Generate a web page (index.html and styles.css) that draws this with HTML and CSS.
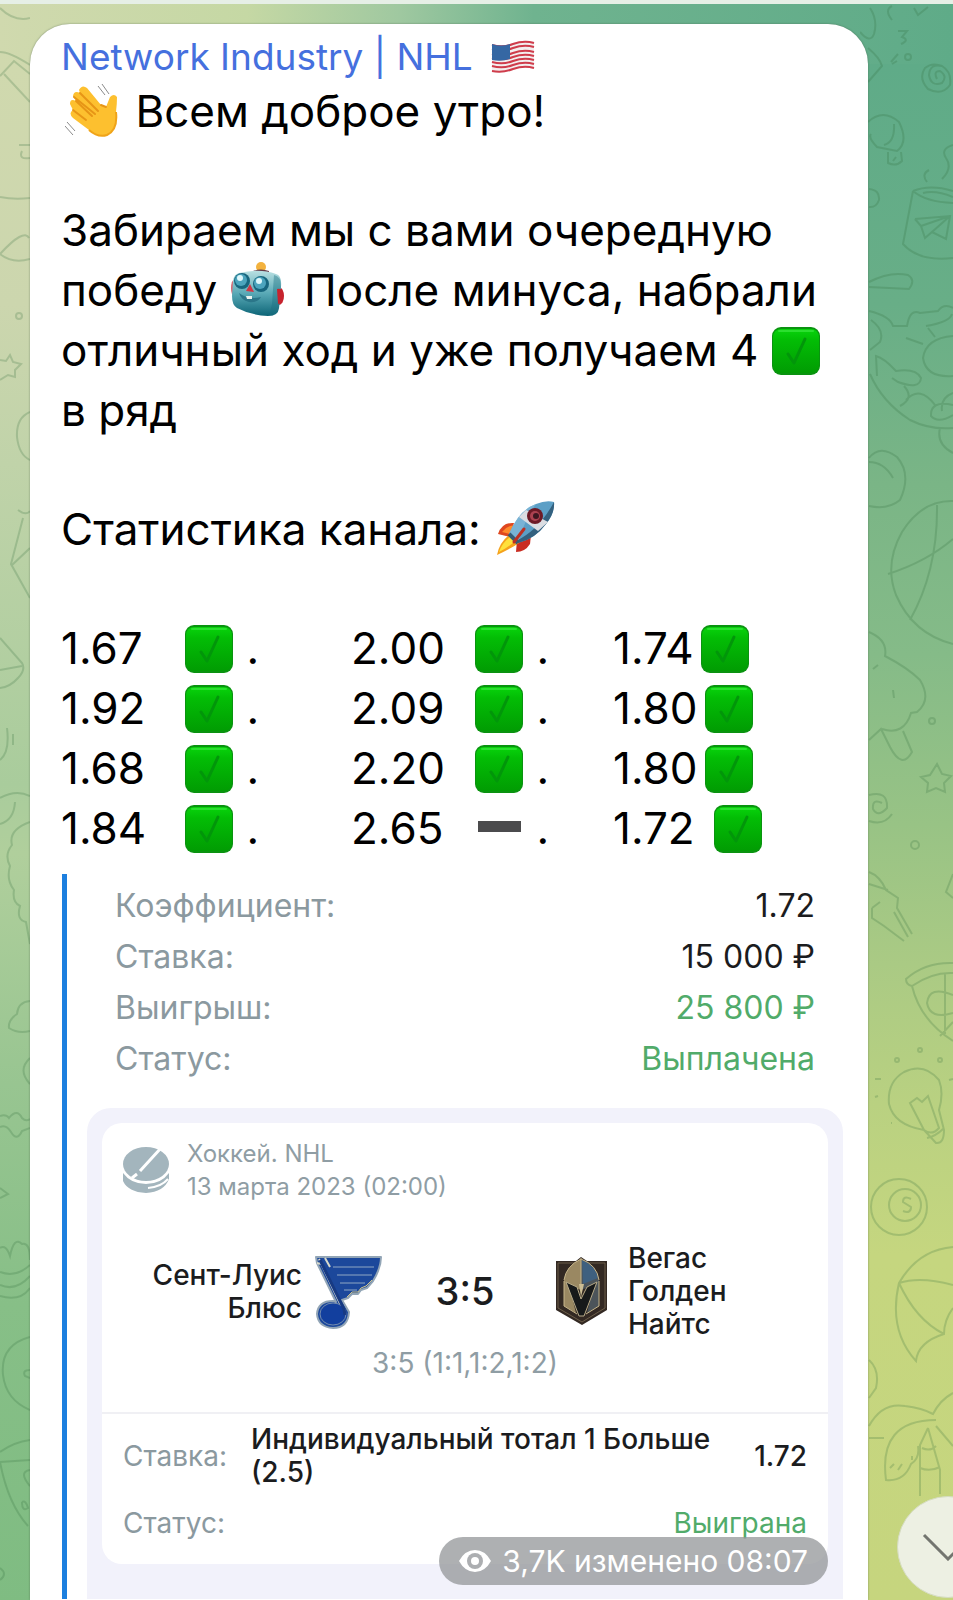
FILE: index.html
```html
<!DOCTYPE html>
<html lang="ru">
<head>
  <meta charset="UTF-8" />
  <meta name="viewport" content="width=device-width, initial-scale=1.0"/>
  <title>Network Industry | NHL</title>
  <link rel="stylesheet" href="styles.css">
</head>

<body>
  <!-- Shared emoji -->
  <svg class="sprite" aria-hidden="true">
    <defs>
      <linearGradient id="greenFill" x1="0" y1="0" x2="0" y2="1">
        <stop offset="0" stop-color="#08d40c"/>
        <stop offset="0.25" stop-color="#03bd05"/>
        <stop offset="1" stop-color="#019c03"/>
      </linearGradient>
      <symbol id="check" viewBox="0 0 50 50">
        <rect x="1" y="1" width="48" height="48" rx="9" fill="#0a9310"/>
        <rect x="2" y="3" width="46" height="44" rx="8" fill="url(#greenFill)"/>
        <path d="M8 5H42" stroke="#3be63f" stroke-width="2" stroke-linecap="round" opacity="0.7"/>
        <path d="M17 28L23 37L34 13" fill="none" stroke="#02960a" stroke-width="3" stroke-linecap="round" stroke-linejoin="round"/>
      </symbol>
    </defs>
  </svg>

  <main class="chat">
    <!-- Wallpaper doodles -->
    <svg class="doodles doodles-left" viewBox="0 0 30 1600" width="30" height="1600" aria-hidden="true">
      <path d="M0 8Q14 22 30 18M0 52Q10 52 30 65M0 76L14 61L30 74M4 74L30 102M19 145H30M22 151Q18 160 30 158M0 197Q14 200 30 198M0 254Q24 228 29 238M0 254Q12 264 30 259"/>
      <circle cx="19" cy="316" r="3"/>
      <path d="M0 360L6 361L10 355L13 362L21 364L15 370L15 377L8 375L0 380M30 412Q16 418 17 437Q19 455 30 460M18 510Q26 516 30 511M23 518L11 564L30 598M11 566L30 548M0 638L22 663Q26 670 18 678Q10 687 0 688M0 670L22 666M7 728Q10 752 0 760M13 734V745M0 798Q16 789 30 796"/>
      <path d="M0 824Q14 820 15 802M30 822Q8 830 12 845Q4 855 10 866Q6 880 14 890Q12 902 20 906Q16 920 26 922L30 944M30 1001Q18 1002 17 1014Q8 1020 9 1028Q18 1034 30 1031M30 1058Q17 1070 30 1084M0 1116Q6 1114 9 1118Q17 1108 22 1118Q26 1122 30 1119M0 1127Q6 1124 11 1132Q17 1142 22 1131L30 1128M0 1188L8 1194L0 1198M0 1248Q6 1244 10 1256Q14 1236 22 1244Q30 1242 30 1260M0 1272Q16 1278 30 1265M0 1285Q16 1292 30 1276M0 1296Q20 1302 30 1288M30 1337Q0 1345 3 1375Q6 1400 30 1410M30 1370Q22 1370 25 1376L30 1378M0 1452Q14 1442 30 1440M0 1462L30 1460M0 1462Q8 1504 28 1526M30 1470Q18 1472 30 1486M22 1502Q26 1500 28 1508Q22 1512 22 1502M0 1568Q8 1574 0 1580"/>
    </svg>
    <svg class="doodles doodles-right" viewBox="0 0 93 1600" width="93" height="1600" aria-hidden="true">
      <path d="M10 8Q18 20 14 34Q10 44 0 32M32 6Q24 10 32 20M54 8L58 15L68 7M38 31H47L42 37Q50 40 41 44M8 48Q20 58 22 66L8 82M31 62L38 54M32 64L37 61"/>
      <circle cx="48" cy="57" r="3"/>
      <path d="M77 79Q73 71 80 71Q88 76 82 83Q71 87 69 75Q70 63 82 66Q92 72 90 85Q82 96 68 89Q58 78 65 68Q72 62 82 66M8 122Q23 108 39 122Q49 142 37 151L17 147Q8 138 11 134M34 124Q35 142 24 145M28 152V163Q36 167 42 161L41 152M33 161L36 157M9 189Q20 190 19 200Q16 208 9 207M67 182Q61 174 69 170M82 179Q93 168 86 158Q80 149 93 145"/>
      <path d="M53 191Q70 184 93 191M53 191Q66 202 93 203M63 193Q76 190 93 197M53 191L43 244Q59 262 93 258M55 219L90 216L86 239L72 232L65 238L61 226L55 219M61 226L90 216L72 232M9 282Q30 271 48 275Q56 280 49 289L9 287M9 311Q30 316 33 326H47Q50 308 60 313L78 311Q84 303 93 308M66 326Q90 322 92 314M46 338L63 344M68 328L75 337M11 320Q25 330 20 342L10 350M17 376L16 356Q24 358 36 371Q56 368 61 378Q60 390 38 382L32 378M10 374Q22 402 50 420Q70 430 93 428M44 386Q55 398 40 406M46 400Q60 385 75 405M93 336Q66 338 63 358Q66 378 93 376M93 393Q80 398 82 411M93 405Q70 400 71 416Q78 424 93 415M80 428Q76 444 93 453M9 458Q20 444 37 457Q52 474 40 500Q28 510 9 506M9 462Q24 462 33 478"/>
      <path d="M93 501Q62 500 42 532Q24 564 36 595Q53 634 93 644M77 505Q78 570 50 620M28 574Q66 562 93 539M9 632Q28 640 25 656Q48 668 60 680Q72 700 57 712L51 713Q44 736 22 729M13 669L18 665M33 690L34 698M9 740L21 729L30 747Q42 770 52 752L43 731M77 764L82 774L91 776L84 783L85 792L76 788L67 792L68 783L61 777L70 775ZM9 795Q28 790 27 808Q18 818 13 809Q12 798 22 803M9 821Q24 826 32 814"/>
      <circle cx="72" cy="721" r="3"/>
      <circle cx="55" cy="845" r="4"/>
      <path d="M9 872Q20 876 26 890L38 898L37 908L52 934M28 890L9 884M34 912L48 937M12 908V918L24 926L44 941M12 908L20 902M93 874L86 892L93 898M93 963Q65 962 46 979Q46 985 52 986Q72 972 93 973M52 986Q60 1020 93 1041M85 974V1034M93 1022L80 1036M93 995Q69 985 67 1003Q70 1020 93 1013"/>
      <circle cx="60" cy="1050" r="2"/><circle cx="37" cy="1060" r="2"/><circle cx="80" cy="1060" r="2"/>
      <path d="M64 1130Q34 1125 29 1104Q27 1082 44 1072Q64 1062 79 1080Q84 1093 79 1110L84 1130Q84 1144 76 1143L64 1130M64 1130L50 1103L57 1098L62 1102L68 1096L79 1128Q72 1136 64 1130M67 1138Q76 1136 83 1129M15 1079H21M15 1097L18 1096M31 1123H32M89 1080L93 1079"/>
      <circle cx="39" cy="1207" r="28"/><circle cx="45" cy="1205" r="16"/>
      <path d="M51 1199Q43 1195 43 1202L51 1207Q51 1214 43 1211M93 1247Q58 1250 39 1283Q28 1330 56 1361Q58 1342 84 1334Q84 1320 93 1308M39 1283Q60 1276 93 1285M39 1283Q56 1320 84 1334M9 1360Q20 1370 16 1388L9 1398M9 1426Q22 1402 45 1406Q62 1408 73 1414Q80 1400 93 1393M76 1420Q18 1420 26 1480Q44 1482 51 1464Q60 1458 58 1446M9 1438H24M68 1428L60 1445V1496M68 1428L80 1470V1494M62 1448Q70 1452 76 1446M60 1468Q70 1472 80 1467M76 1426L93 1446M30 1468L34 1464M38 1470L42 1464M52 1460V1456"/>
    </svg>

    <article class="message">
      <h1 class="channel">Network Industry | NHL
        <svg class="flag" viewBox="0 0 44 34" role="img" aria-label="Флаг США">
          <path d="M1 4Q12 7 22 3Q33 -1 43 2V29Q33 26 22 30Q12 34 1 32Z" fill="#f3eeee"/>
          <g fill="none" stroke="#cf3c4b" stroke-width="2">
            <path d="M1 5Q12 8 22 4Q33 0 43 3M1 9Q12 12 22 8Q33 4 43 7M1 14Q12 17 22 13Q33 9 43 12M1 18Q12 21 22 17Q33 13 43 16M1 22Q12 25 22 21Q33 17 43 20M1 26Q12 29 22 25Q33 21 43 24M1 31Q12 33 22 29Q33 25 43 28"/>
          </g>
          <path d="M1 4Q10 7 19 4V19Q10 22 1 20Z" fill="#3567a3"/>
        </svg>
      </h1>

      <p class="text">
        <svg class="emoji" viewBox="0 0 54 54" role="img" aria-label="Машет рукой">
          <g fill="none" stroke="#8b8b8b" stroke-width="1">
            <path d="M33 3L40 12M37 1L44 11M2 39L10 48M0 43L8 52"/>
          </g>
          <path d="M8 27L5 21Q5 15 11 18L8 13Q9 7 15 10L14 7Q17 1 22 5L36 22L41 24L45 14Q49 10 52 14Q52 21 51 29Q53 47 42 52Q33 55 24 47L8 35Q3 30 8 27Z" fill="#fdc02f"/>
          <path d="M8 27L21 37M11 18L27 33M9 14L30 31M15 10L33 28M36 22L41 24" fill="none" stroke="#e79516" stroke-width="2" stroke-linecap="round"/>
          <path d="M51 29Q53 47 42 52Q33 55 24 47" fill="none" stroke="#f0a419" stroke-width="2"/>
        </svg>
        Всем доброе утро!
      </p>

      <p class="text">
        Забираем мы с вами очередную<br>
        победу
        <svg class="emoji robot" viewBox="0 0 54 54" role="img" aria-label="Робот">
          <defs>
            <linearGradient id="robotFace" x1="0" y1="0" x2="0" y2="1">
              <stop offset="0" stop-color="#b9e0e2"/>
              <stop offset="0.5" stop-color="#59a9b6"/>
              <stop offset="1" stop-color="#0d6577"/>
            </linearGradient>
          </defs>
          <circle cx="31" cy="5" r="5" fill="#f3b23e"/>
          <path d="M23 9Q31 6 39 9V12H23Z" fill="#653946"/>
          <ellipse cx="4" cy="26" rx="3" ry="8" fill="#d86571"/>
          <ellipse cx="49" cy="34" rx="5" ry="9" fill="#c7232e"/>
          <path d="M9 11Q30 6 46 12Q52 13 51 25L49 46Q48 54 38 54Q20 53 7 46Q2 43 2 34L3 19Q4 12 9 11Z" fill="url(#robotFace)"/>
          <path d="M44 13Q51 14 51 25L49 46Q48 54 39 54L42 42Z" fill="#196f80" opacity="0.4"/>
          <circle cx="12" cy="19" r="8" fill="#17667e"/><circle cx="31" cy="22" r="8" fill="#17667e"/>
          <circle cx="11" cy="18" r="6" fill="#4ca4bd"/><circle cx="30" cy="21" r="6" fill="#4ca4bd"/>
          <circle cx="10" cy="16" r="3" fill="#dff7fb"/><circle cx="29" cy="19" r="3" fill="#dff7fb"/>
          <path d="M20 22L16 29L24 30Z" fill="#cf3645"/>
          <path d="M9 31Q18 38 31 35Q28 41 19 40Q11 38 9 31Z" fill="#2b7689"/>
          <path d="M16 34H22V37H17Z" fill="#e9f3ef"/>
          <path d="M47 27Q53 25 53 34Q53 41 48 42Z" fill="#c7232e"/>
        </svg>
        После минуса, набрали<br>
        отличный ход и уже получаем 4
        <svg class="check" role="img" aria-label="Галочка"><use href="#check"/></svg><br>
        в ряд
      </p>

      <p class="text">
        Статистика канала:
        <svg class="emoji rocket" viewBox="0 0 58 54" role="img" aria-label="Ракета">
          <path d="M17 22Q5 21 1 33L13 36Z" fill="#df471f"/>
          <path d="M18 24Q9 25 5 31L13 33Z" fill="#ff8a2b"/>
          <path d="M34 34L33 43Q28 51 19 51L20 39Z" fill="#c92c21"/>
          <path d="M12 34L22 42Q15 47 0 54Q2 42 12 34Z" fill="#f5a21c"/>
          <path d="M13 36L18 40Q12 46 2 51Q5 42 13 36Z" fill="#ffe13b"/>
          <path d="M12 33Q22 9 39 3Q49 -1 57 1Q58 12 49 23Q38 38 21 42Z" fill="#5c9fc6"/>
          <path d="M12 33Q22 9 39 3Q28 18 21 42Z" fill="#8cc1df" opacity="0.6"/>
          <path d="M57 1Q58 12 49 23Q38 38 21 42L19 40Q42 29 57 1Z" fill="#34617f"/>
          <path d="M29 9L51 21L41 30L22 16Z" fill="#dbdde2"/>
          <circle cx="38" cy="15" r="8" fill="#6d1a26"/>
          <circle cx="38" cy="15" r="5" fill="#ac4250"/>
          <circle cx="39" cy="15" r="3" fill="#3d1720"/>
          <path d="M12 33L21 42" stroke="#365c76" stroke-width="4"/>
          <path d="M27 28L17 41" stroke="#bd3022" stroke-width="3" stroke-linecap="round"/>
        </svg>
      </p>

      <table class="stats">
        <colgroup>
          <col class="odds">
          <col class="mark-first">
          <col class="odds">
          <col class="mark-second">
          <col>
        </colgroup>
        <tr>
          <td>1.67</td>
          <td class="mark"><svg class="check" role="img" aria-label="Галочка"><use href="#check"/></svg> .</td>
          <td>2.00</td>
          <td class="mark"><svg class="check" role="img" aria-label="Галочка"><use href="#check"/></svg> .</td>
          <td>1.74<svg class="check" role="img" aria-label="Галочка"><use href="#check"/></svg></td>
        </tr>
        <tr>
          <td>1.92</td>
          <td class="mark"><svg class="check" role="img" aria-label="Галочка"><use href="#check"/></svg> .</td>
          <td>2.09</td>
          <td class="mark"><svg class="check" role="img" aria-label="Галочка"><use href="#check"/></svg> .</td>
          <td>1.80<svg class="check" role="img" aria-label="Галочка"><use href="#check"/></svg></td>
        </tr>
        <tr>
          <td>1.68</td>
          <td class="mark"><svg class="check" role="img" aria-label="Галочка"><use href="#check"/></svg> .</td>
          <td>2.20</td>
          <td class="mark"><svg class="check" role="img" aria-label="Галочка"><use href="#check"/></svg> .</td>
          <td>1.80<svg class="check" role="img" aria-label="Галочка"><use href="#check"/></svg></td>
        </tr>
        <tr>
          <td>1.84</td>
          <td class="mark"><svg class="check" role="img" aria-label="Галочка"><use href="#check"/></svg> .</td>
          <td>2.65</td>
          <td class="mark"><svg class="check" viewBox="0 0 50 50" role="img" aria-label="Минус"><rect x="4" y="17" width="43" height="11" fill="#4b4b4d"/></svg> .</td>
          <td>1.72 <svg class="check" role="img" aria-label="Галочка"><use href="#check"/></svg></td>
        </tr>
      </table>

      <section class="preview">
        <dl class="summary">
          <div class="row"><dt>Коэффициент:</dt><dd>1.72</dd></div>
          <div class="row"><dt>Ставка:</dt><dd>15 000 ₽</dd></div>
          <div class="row"><dt>Выигрыш:</dt><dd class="green">25 800 ₽</dd></div>
          <div class="row"><dt>Статус:</dt><dd class="green">Выплачена</dd></div>
        </dl>

        <div class="coupon">
          <div class="card">
            <div class="event">
              <svg class="puck" viewBox="0 0 46 46" aria-hidden="true">
                <path d="M0 26Q8 37 23 37Q38 37 46 26V32Q41 45 23 46Q5 45 0 34Z" fill="#a3b5bd"/>
                <path d="M25 41Q38 40 45 32" fill="none" stroke="#fff" stroke-width="2"/>
                <ellipse cx="23" cy="17" rx="23" ry="17" fill="#a3b5bd"/>
                <path d="M38 1L17 24M14 27L9 31" stroke="#fff" stroke-width="3"/>
              </svg>
              <div>
                <div>Хоккей. NHL</div>
                <div>13 марта 2023 (02:00)</div>
              </div>
            </div>

            <div class="match">
              <div class="team home">
                <span>Сент-Луис Блюс</span>
                <svg class="logo" viewBox="0 0 67 74" role="img" aria-label="Логотип Сент-Луис Блюс">
                  <path d="M1 2H66Q66 13 58 26L52 33L46 35L43 39L37 39L33 43L27 45L34 57Q33 73 18 73Q3 72 2 59Q3 46 18 46L21 47L2 8Z" fill="#1c489b" stroke="#92a5b6" stroke-width="2" stroke-linejoin="round"/>
                  <path d="M4 4L28 55M10 3L15 12M2 8L6 9" fill="none" stroke="#d8d9ca" stroke-width="2"/>
                  <path d="M18 12H59M22 20H57M25 28H50M29 35H42" stroke="#8fa7c3" stroke-width="1"/>
                  <path d="M57 25L51 31L46 33L43 37L37 37L32 42" fill="none" stroke="#d0c58a" stroke-width="1"/>
                  <ellipse cx="18" cy="59" rx="13" ry="11" fill="#123f9e" stroke="#748cae" stroke-width="1"/>
                  <path d="M5 5L29 54L30 60" fill="none" stroke="#173a83" stroke-width="3"/>
                </svg>
              </div>
              <strong class="score">3:5</strong>
              <div class="team">
                <svg class="logo" viewBox="0 0 67 74" role="img" aria-label="Логотип Вегас Голден Найтс">
                  <path d="M8 6H28L33 2L39 6H59V55L34 70L8 55Z" fill="#332923"/>
                  <path d="M10 8H57V53L34 67L10 53Z" fill="none" stroke="#6b5d48" stroke-width="1"/>
                  <path d="M33 4Q18 11 16 25V51L28 58L21 30L33 35Z" fill="#9a8862"/>
                  <path d="M33 4Q49 10 51 25V51L39 58L46 30L33 35Z" fill="#4c545a"/>
                  <path d="M34 5Q48 11 50 23L35 29Z" fill="#3f607f"/>
                  <path d="M16 26V51L29 59M51 26V51L38 59M33 3V29M16 25Q18 11 33 4Q49 10 51 25" fill="none" stroke="#c7b68b" stroke-width="1"/>
                  <path d="M18 27L29 32L33 44L39 32L49 27L36 61H31Z" fill="#17191a" stroke="#b7aa88" stroke-width="1"/>
                  <path d="M31 29L33 42L36 29Z" fill="#cbbd94"/>
                </svg>
                <span>Вегас Голден Найтс</span>
              </div>
            </div>
            <div class="periods">3:5 (1:1,1:2,1:2)</div>

            <div class="bet">
              <span class="label">Ставка:</span>
              <span class="pick">Индивидуальный тотал 1 Больше (2.5)</span>
              <span>1.72</span>
            </div>
            <div class="bet-status">
              <span class="label">Статус:</span>
              <span class="green">Выиграна</span>
            </div>
          </div>
        </div>
      </section>

      <div class="meta">
        <svg class="eye" viewBox="0 0 32 24" aria-hidden="true">
          <path d="M0 12Q6 1 16 1Q26 1 32 12Q26 23 16 23Q6 23 0 12Z" fill="#fff"/>
          <circle cx="16" cy="12" r="8" fill="#acaeb1"/>
          <circle cx="16" cy="12" r="4" fill="#fff"/>
        </svg>
        3,7K изменено 08:07
      </div>
    </article>

    <button class="scroll-down" type="button" aria-label="Вниз">
      <svg viewBox="0 0 52 28" width="52" height="28" aria-hidden="true"><path d="M2 2L26 26L50 2" fill="none" stroke="#73756f" stroke-width="3"/></svg>
    </button>
  </main>
</body>
</html>
```
FILE: styles.css
```css
* {
  box-sizing: border-box;
}

body {
  margin: 0;
  font-family: Inter, "Liberation Sans", sans-serif;
  color: #000;
}

.sprite {
  position: absolute;
  width: 0;
  height: 0;
}

/* Chat wallpaper */
.chat {
  position: relative;
  display: flex;
  flex-direction: column;
  min-height: 100vh;
  overflow: hidden;
  padding: 20px 85px 0 30px;
  border-top: 4px solid #e6efe6;
  background:
    linear-gradient(to right, #d0d9ae 0%, #c5d8a4 26%, #9fc8a0 42%, #6fb38f 56%, #5fab88 100%) top / 100% 60px no-repeat,
    linear-gradient(#d0d9ae 60px, #ccd6ae 300px, #c0d3a9 460px, #a9cc9c 780px, #b0cf9c 850px, #98c591 1080px, #87bf87 1300px, #7fbc82 1600px) left / 50% 100% no-repeat,
    linear-gradient(#5fab88 60px, #68ae87 300px, #7ab586 480px, #85bb88 650px, #98c385 820px, #aaca84 960px, #b9d181 1100px, #c5d67f 1250px, #c6d57e 1600px) right / 50% 100% no-repeat;
}

.doodles {
  position: absolute;
  top: -4px;
  fill: none;
  stroke: #2f6b3a;
  stroke-width: 2;
  opacity: 0.22;
}

.doodles-left {
  left: 0;
}

.doodles-right {
  right: 0;
}

/* Message bubble */
.message {
  position: relative;
  flex: 1;
  padding: 9px 25px 0 31px;
  background: #fff;
  border-radius: 40px 40px 0 0;
  box-shadow: 0 0 2px rgba(60, 80, 60, 0.6);
}

.channel {
  margin: 0;
  font-size: 37px;
  font-weight: 400;
  line-height: 48px;
  color: #4570de;
}

.flag {
  width: 44px;
  height: 34px;
  margin-left: 8px;
  vertical-align: -4px;
}

.text {
  margin: 0 0 59px;
  font-size: 44px;
  line-height: 60px;
  white-space: nowrap;
}

.emoji {
  width: 54px;
  height: 54px;
  margin: 0 4px;
  vertical-align: -10px;
}

.robot {
  margin: 0 8px 0 0;
}

.rocket {
  width: 58px;
}

.check {
  width: 50px;
  height: 50px;
  margin-left: 6px;
  vertical-align: -10px;
}

.text .check {
  margin-left: 0;
}

.stats {
  width: 100%;
  border-collapse: collapse;
  table-layout: fixed;
  font-size: 44px;
  line-height: 60px;
}

.stats td {
  height: 60px;
  padding: 0;
  white-space: nowrap;
}

.odds {
  width: 123px;
}

.mark-first {
  width: 167px;
}

.mark-second {
  width: 139px;
}

.mark .check {
  margin: 0;
}

/* Quoted coupon */
.preview {
  margin: 16px 0 0 1px;
  padding-left: 20px;
  border-left: 5px solid #1c7fdf;
}

.summary {
  margin: 0;
  padding: 6px 28px 24px;
  font-size: 32px;
  line-height: 51px;
}

.row {
  display: flex;
  justify-content: space-between;
}

.row dt,
.label {
  color: #8b999f;
}

.row dd {
  margin: 0;
  color: #1b1c1e;
}

.row .green,
.green {
  color: #51ab6a;
}

.coupon {
  padding: 15px 15px 35px;
  background: #f2f2fb;
  border-radius: 24px 24px 0 0;
}

.card {
  background: #fff;
  border-radius: 20px;
  padding: 14px 21px 24px;
  font-size: 28px;
  line-height: 33px;
  color: #1b1c1e;
}

.event {
  display: flex;
  align-items: center;
  gap: 18px;
  font-size: 24px;
  color: #8f9da4;
}

.puck {
  width: 46px;
  height: 46px;
}

.match {
  display: grid;
  grid-template-columns: 1fr 166px 1fr;
  align-items: center;
  margin-top: 39px;
}

.team {
  display: flex;
  align-items: center;
  gap: 13px;
  font-weight: 500;
}

.team span {
  width: 154px;
}

.home {
  justify-content: flex-end;
  text-align: right;
}

.logo {
  flex: none;
  width: 67px;
  height: 74px;
}

.score {
  font-size: 38px;
  font-weight: 500;
  text-align: center;
}

.periods {
  margin-top: 6px;
  text-align: center;
  color: #8f9da4;
}

.bet {
  display: flex;
  align-items: center;
  margin: 32px -21px 0;
  padding: 9px 21px 0;
  border-top: 2px solid #f0f0f4;
  font-weight: 500;
}

.label {
  width: 128px;
  font-weight: 400;
}

.pick {
  flex: 1;
  padding-right: 20px;
}

.bet-status {
  display: flex;
  justify-content: space-between;
  margin-top: 18px;
}

/* Views and time badge */
.meta {
  position: absolute;
  right: 40px;
  bottom: 15px;
  display: flex;
  align-items: center;
  gap: 11px;
  height: 48px;
  padding: 0 20px;
  border-radius: 24px;
  background: rgba(147, 149, 152, 0.75);
  color: #fff;
  font-size: 30px;
}

.eye {
  width: 32px;
  height: 24px;
}

.scroll-down {
  position: absolute;
  right: -46px;
  bottom: 2px;
  display: flex;
  align-items: center;
  justify-content: center;
  width: 102px;
  height: 102px;
  padding: 0;
  border: 1px solid #d5dcc0;
  border-radius: 50%;
  background: #edf0e3;
  cursor: pointer;
}
```
